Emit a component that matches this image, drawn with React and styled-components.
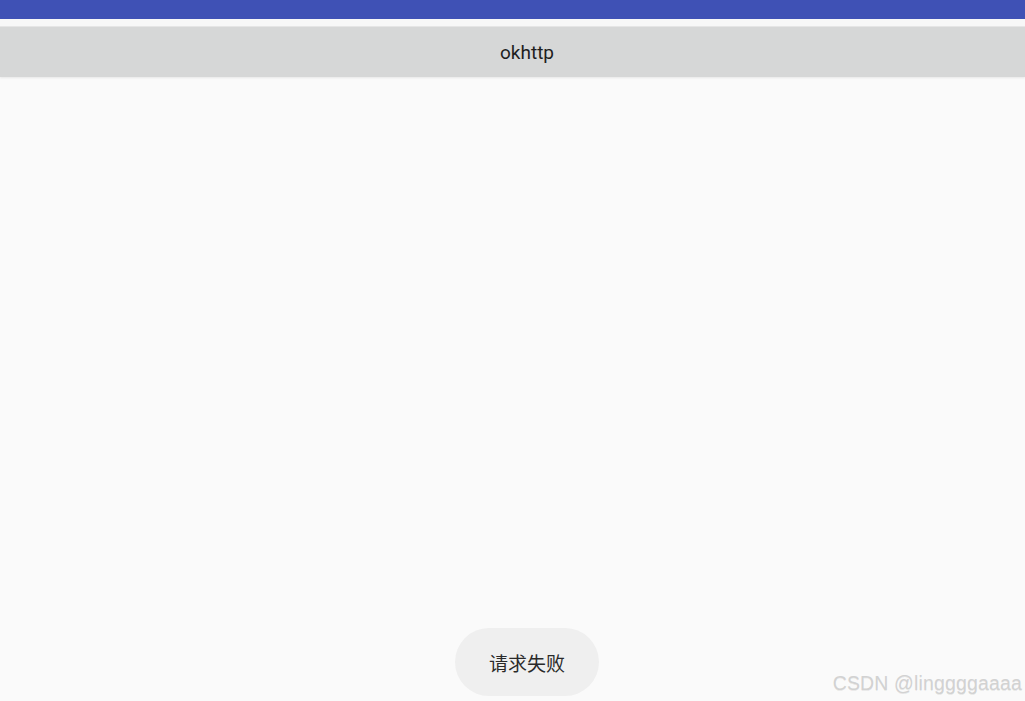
import React from "react";
import styled, { createGlobalStyle } from "styled-components";

const Global = createGlobalStyle`
  html, body { margin: 0; padding: 0; background: #fafafa; }
  #root { height: 701px; }
`;

const Screen = styled.div`
  width: 1025px;
  height: 701px;
  background: #fafafa;
  display: flex;
  flex-direction: column;
  position: relative;
  overflow: hidden;
  font-family: Roboto, "Noto Sans", "Noto Sans CJK SC", sans-serif;
`;

const StatusBar = styled.div`
  height: 19px;
  background: #3f51b5;
  flex: none;
`;

const Gap = styled.div`
  height: 8px;
  background: #f7f7f7;
  border-bottom: 1px solid #e6e6e6;
  box-sizing: border-box;
  flex: none;
`;

const TitleBar = styled.div`
  height: 50px;
  background: #d6d7d7;
  display: flex;
  align-items: center;
  justify-content: center;
  padding-left: 29px;
  font-size: 19px;
  color: #1e1e1e;
  flex: none;
  box-shadow: 0 1px 2px rgba(0, 0, 0, 0.08);
`;

const Content = styled.div`
  flex: 1;
  display: flex;
  flex-direction: column;
  align-items: center;
  justify-content: flex-end;
  padding-left: 29px;
  padding-bottom: 5px;
`;

const Toast = styled.div`
  width: 144px;
  height: 68px;
  border-radius: 34px;
  background: #efefef;
  display: flex;
  align-items: center;
  justify-content: center;
  font-family: "Noto Sans CJK SC", sans-serif;
  font-size: 19px;
  color: #2a2a2a;
`;

const Watermark = styled.div`
  position: absolute;
  right: 3px;
  bottom: 6px;
  font-family: "Liberation Sans", Arial, sans-serif;
  font-size: 19.5px;
  letter-spacing: 0.15px;
  color: #d2d2d2;
  text-shadow: 0 1px 0 rgba(0, 0, 0, 0.08);
`;

export default function App() {
  return (
    <>
      <Global />
      <Screen>
        <StatusBar />
        <Gap />
        <TitleBar>okhttp</TitleBar>
        <Content>
          <Toast>请求失败</Toast>
        </Content>
        <Watermark>CSDN @linggggaaaa</Watermark>
      </Screen>
    </>
  );
}
